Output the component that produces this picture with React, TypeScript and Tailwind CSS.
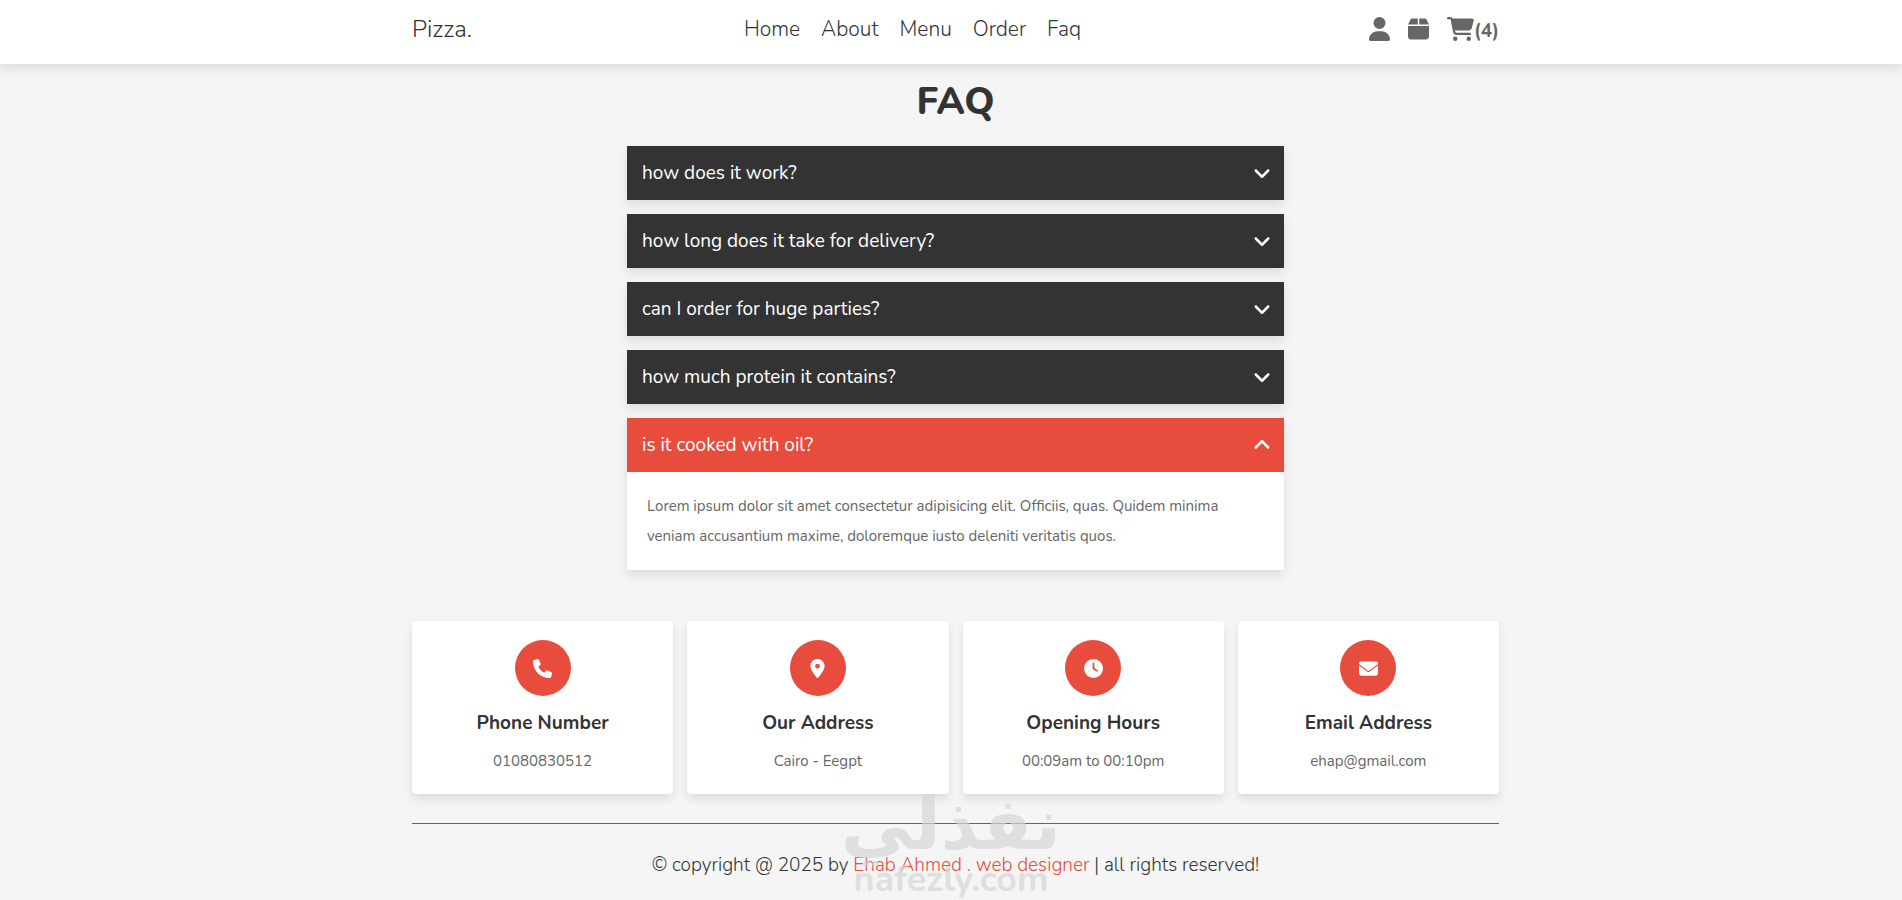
import { ReactNode, useState } from "react";
import { cx } from "class-variance-authority";
import {
  FaAngleDown,
  FaBox,
  FaCartShopping,
  FaClock,
  FaEnvelope,
  FaLocationDot,
  FaPhone,
  FaUser,
} from "react-icons/fa6";

const links = ["Home", "About", "Menu", "Order", "Faq"];

const answer =
  "Lorem ipsum dolor sit amet consectetur adipisicing elit. Officiis, quas. Quidem minima veniam accusantium maxime, doloremque iusto deleniti veritatis quos.";

const questions = [
  "how does it work?",
  "how long does it take for delivery?",
  "can I order for huge parties?",
  "how much protein it contains?",
  "is it cooked with oil?",
];

const contacts = [
  { icon: <FaPhone />, title: "Phone Number", value: "01080830512" },
  { icon: <FaLocationDot />, title: "Our Address", value: "Cairo - Eegpt" },
  { icon: <FaClock />, title: "Opening Hours", value: "00:09am to 00:10pm" },
  { icon: <FaEnvelope />, title: "Email Address", value: "ehap@gmail.com" },
];

export default function App() {
  return (
    <div className="relative min-h-screen overflow-hidden bg-[#f5f5f5] font-['Nunito','Noto_Sans',sans-serif] text-[#333]">
      <Header />
      <Container>
        <main>
          <Faq />
        </main>
        <Footer />
      </Container>
      <Watermark />
    </div>
  );
}

function Container({ children }: { children: ReactNode }) {
  return (
    <div className="pl-[9px]">
      <div className="mx-auto max-w-[1087px]">{children}</div>
    </div>
  );
}

function Header() {
  return (
    <header className="bg-white pt-[13px] pb-[19px] shadow-[0_5px_10px_rgba(0,0,0,0.1)]">
      <Container>
        <div className="flex h-8 items-center justify-between">
          <a href="#home" className="text-[24px] leading-8 font-light">
            Pizza.
          </a>
          <nav className="flex gap-[21px] text-[21px] leading-8 font-light">
            {links.map((link) => (
              <a key={link} href={`#${link.toLowerCase()}`}>
                {link}
              </a>
            ))}
          </nav>
          <div className="ml-4 flex items-center gap-[18px] text-[#666]">
            <button type="button" aria-label="Account">
              <FaUser className="h-6 w-[21px]" />
            </button>
            <button type="button" aria-label="Orders">
              <FaBox className="h-6 w-[21px]" />
            </button>
            <button type="button" aria-label="Cart" className="flex items-end">
              <FaCartShopping className="h-6 w-[27px]" />
              <span className="text-[19px] leading-5 font-bold">(4)</span>
            </button>
          </div>
        </div>
      </Container>
    </header>
  );
}

function Faq() {
  const [open, setOpen] = useState<number | null>(4);

  return (
    <section id="faq">
      <h1 className="mb-[6px] text-center text-[38px] leading-[76px] font-extrabold">
        FAQ
      </h1>
      <div className="mx-auto flex max-w-[657px] flex-col gap-[14px]">
        {questions.map((question, i) => (
          <div key={question} className="shadow-[0_5px_10px_rgba(0,0,0,0.1)]">
            <button
              type="button"
              aria-expanded={open === i}
              className={cx(
                "flex w-full cursor-pointer items-center justify-between py-[15px] pr-[13px] pl-[15px] text-left text-[19px] leading-6 text-white",
                open === i ? "bg-[#e74c3c]" : "bg-[#333]",
              )}
              onClick={() => setOpen(open === i ? null : i)}
            >
              {question}
              <FaAngleDown
                className={cx("h-5 w-[18px]", open === i && "rotate-180")}
              />
            </button>
            {open === i && (
              <p className="bg-white px-5 py-[19px] text-[15px] leading-[30px] text-[#666]">
                {answer}
              </p>
            )}
          </div>
        ))}
      </div>
    </section>
  );
}

function Footer() {
  return (
    <footer className="mt-[51px]">
      <div className="grid grid-cols-4 gap-[14px]">
        {contacts.map(({ icon, title, value }) => (
          <div
            key={title}
            className="flex flex-col items-center rounded bg-white pt-[19px] pb-[18px] text-center shadow-[0_5px_10px_rgba(0,0,0,0.1)]"
          >
            <div className="flex size-14 items-center justify-center rounded-full bg-[#e74c3c] text-[19px] text-white">
              {icon}
            </div>
            <h3 className="mt-[13px] text-[19px] leading-7 font-bold">{title}</h3>
            <p className="mt-[9px] text-[15px] leading-[30px] text-[#666]">
              {value}
            </p>
          </div>
        ))}
      </div>
      <p className="mt-[29px] border-t border-[#666] pt-[27px] text-center text-[19px] leading-7 font-light">
        © copyright @ 2025 by{" "}
        <span className="text-[#e74c3c]">Ehab Ahmed . web designer</span> | all
        rights reserved!
      </p>
    </footer>
  );
}

function Watermark() {
  return (
    <div className="pointer-events-none absolute inset-x-0 bottom-0 flex flex-col items-center text-[#d6d6d6] opacity-70">
      <span
        lang="ar"
        dir="rtl"
        className="font-['DejaVu_Sans',sans-serif] text-[72px] leading-[72px] font-bold"
      >
        نفذلي
      </span>
      <span className="text-[36px] leading-10 font-bold">nafezly.com</span>
    </div>
  );
}
